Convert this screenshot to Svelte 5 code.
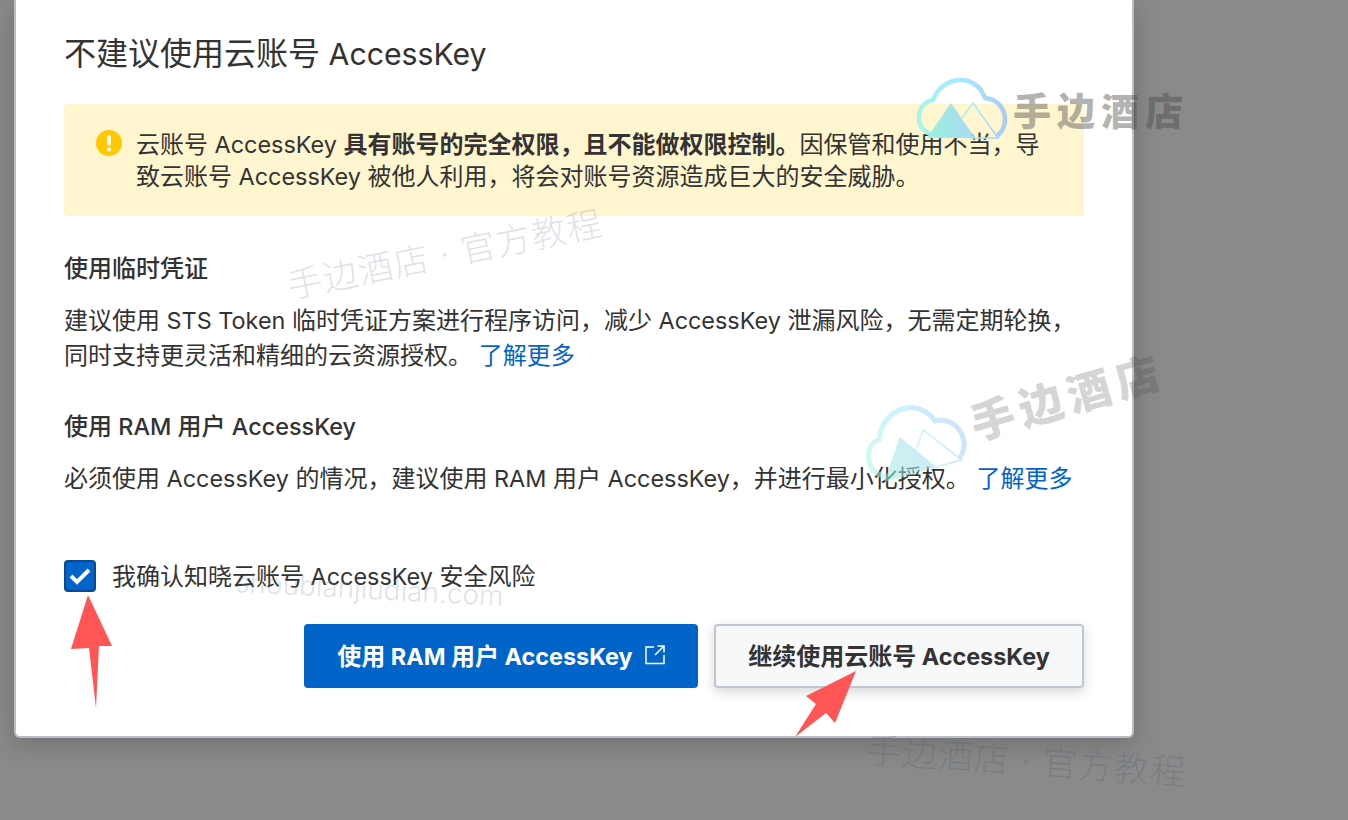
<script>
  const paragraphs = [
    {
      title: '使用临时凭证',
      body: '建议使用 STS Token 临时凭证方案进行程序访问，减少 AccessKey 泄漏风险，无需定期轮换，同时支持更灵活和精细的云资源授权。',
      top: false
    },
    {
      title: '使用 RAM 用户 AccessKey',
      body: '必须使用 AccessKey 的情况，建议使用 RAM 用户 AccessKey，并进行最小化授权。',
      top: true
    }
  ];

  // latin runs are set a touch smaller than the CJK around them
  const parts = (text) => text.match(/[A-Za-z ]+|[^A-Za-z ]+/g);
  const isLatin = (part) => /[A-Za-z]/.test(part);
</script>

{#snippet mix(text)}{#each parts(text) as part}{#if isLatin(part)}<span class="en">{part}</span>{:else}{part}{/if}{/each}{/snippet}

{#snippet cloud()}
  <svg class="cloud-svg" viewBox="0 0 92 64" fill="none">
    <defs>
      <linearGradient id="cloud-grad" x1="0" y1="0" x2="1" y2="0">
        <stop offset="0" stop-color="#a8f5e6" />
        <stop offset="0.5" stop-color="#a5e8ff" />
        <stop offset="1" stop-color="#a9cdf5" />
      </linearGradient>
      <linearGradient id="peak-grad" x1="0" y1="0" x2="1" y2="0">
        <stop offset="0" stop-color="#9cf0dd" />
        <stop offset="1" stop-color="#a9d8f5" />
      </linearGradient>
    </defs>
    <path d="M14 58 C6 54 2 48 3 40 C4 30 10 25 17 24 C22 11 33 4 45 4 C56 4 65 11 69 22 C81 23 89 32 89 44 C89 50 86 56 81 60" stroke="url(#cloud-grad)" stroke-width="4.5" />
    <path d="M35 27 L59 62 L11 62 Z" fill="url(#peak-grad)" />
    <path d="M46 42 L57 27 L82 62 H54" stroke="url(#cloud-grad)" stroke-width="1.5" />
  </svg>
{/snippet}

<div class="page">
  <div class="modal">
    <h1>{@render mix('不建议使用云账号 AccessKey')}</h1>

    <div class="alert">
      <svg class="alert-icon" viewBox="0 0 26 26" width="26" height="26">
        <circle cx="13" cy="13" r="13" fill="#ffc800" />
        <rect x="11.2" y="5" width="3.6" height="10.5" rx="1.6" fill="#fff" />
        <circle cx="13" cy="19.5" r="2.1" fill="#fff" />
      </svg>
      <p>{@render mix('云账号 AccessKey ')}<strong>具有账号的完全权限，且不能做权限控制。</strong>{@render mix('因保管和使用不当，导致云账号 AccessKey 被他人利用，将会对账号资源造成巨大的安全威胁。')}</p>
    </div>

    {#each paragraphs as item}
      <section class:second={item.top}>
        <h2>{@render mix(item.title)}</h2>
        <p>{@render mix(item.body)} <a href="#more">了解更多</a></p>
      </section>
    {/each}

    <label class="confirm">
      <span class="box">
        <svg viewBox="0 0 22 18" width="22" height="18" fill="none">
          <path d="M2 9 L8 15 L20 3" stroke="#fff" stroke-width="4" />
        </svg>
      </span>
      <span class="confirm-text">{@render mix('我确认知晓云账号 AccessKey 安全风险')}</span>
    </label>

    <div class="actions">
      <button class="primary">
        <span>{@render mix('使用 RAM 用户 AccessKey')}</span>
        <svg viewBox="0 0 20 20" width="20" height="20" fill="none" stroke="#fff" stroke-width="1.5">
          <path d="M9 2 H1 V18.5 H19 V10" />
          <path d="M10 10 L18.5 1.5 M12.5 1 H19 V7.5" />
        </svg>
      </button>
      <button class="secondary"><span>{@render mix('继续使用云账号 AccessKey')}</span></button>
    </div>
  </div>

  <!-- watermarks -->
  <span class="mark thin mark-a">手边酒店 · 官方教程</span>
  <span class="mark thin mark-b">手边酒店 · 官方教程</span>
  <span class="mark url">shoubianjiudian.com</span>
  <span class="logo logo-a">{@render cloud()}<b>手边酒店</b></span>
  <span class="logo logo-b">{@render cloud()}<b>手边酒店</b></span>

  <!-- annotation arrows -->
  <svg class="arrows" viewBox="0 0 1348 820" width="1348" height="820">
    <path d="M88 595 L112 646 L99 646 L96 708 L89 648 L71 649 Z" fill="#ff5555" />
    <path d="M856 671 L835 723 L826 713 L795 737 L816 704 L806 696 Z" fill="#ff5555" />
  </svg>
</div>

<style>
  :global(body) {
    margin: 0;
    background: #8a8a8a;
  }

  .page {
    position: relative;
    width: 1348px;
    height: 820px;
    overflow: hidden;
    background: #8a8a8a;
    font-family: Inter, "Noto Sans CJK SC", sans-serif;
    color: #333;
  }

  .modal {
    box-sizing: border-box;
    width: 1120px;
    height: 738px;
    margin-left: 14px;
    padding: 34px 48px 0;
    background: #fff;
    border: 2px solid #b9bec6;
    border-top: 0;
    border-radius: 0 0 6px 6px;
    box-shadow: 0 6px 28px rgba(0, 0, 0, 0.2);
  }

  .en {
    font-size: 0.975em;
  }

  h1 {
    margin: 0;
    font-size: 32px;
    line-height: 40px;
    font-weight: 400;
  }

  h1 .en {
    font-size: 0.945em;
  }

  .alert {
    display: flex;
    gap: 14px;
    margin-top: 30px;
    height: 112px;
    box-sizing: border-box;
    padding: 25px 32px 0;
    background: #fff5cf;
    border-radius: 4px;
  }

  .alert-icon {
    flex: none;
    margin-top: 1px;
  }

  .alert p {
    margin: 0;
    font-size: 24px;
    line-height: 32px;
  }

  .alert strong {
    font-weight: 700;
  }

  section {
    margin-top: 36px;
  }

  section.second {
    margin-top: 37px;
  }

  h2 {
    margin: 0 0 17px;
    font-size: 24px;
    line-height: 34px;
    font-weight: 500;
  }

  section p {
    margin: 0;
    font-size: 24px;
    line-height: 35px;
  }

  a {
    color: #0064c8;
    text-decoration: none;
  }

  .confirm {
    display: flex;
    align-items: center;
    gap: 16px;
    margin-top: 63px;
    font-size: 24px;
    line-height: 32px;
  }

  .confirm-text {
    padding-top: 2px;
  }

  .box {
    display: flex;
    align-items: center;
    justify-content: center;
    box-sizing: border-box;
    width: 32px;
    height: 32px;
    background: #0064c8;
    border: 2px solid #0a4a94;
    border-radius: 4px;
  }

  .actions {
    display: flex;
    justify-content: flex-end;
    gap: 16px;
    margin-top: 31px;
  }

  button {
    display: flex;
    align-items: center;
    justify-content: center;
    gap: 12px;
    box-sizing: border-box;
    height: 64px;
    padding-bottom: 4px;
    font-family: inherit;
    font-size: 24px;
    font-weight: 700;
    border-radius: 4px;
  }

  .primary {
    width: 394px;
    color: #fff;
    background: #0064c8;
    border: 0;
  }

  .secondary {
    width: 370px;
    color: #333;
    background: #f7f8fa;
    border: 2px solid #c0c6d0;
    box-shadow: 0 4px 12px rgba(0, 0, 0, 0.16);
  }

  .mark {
    position: absolute;
    white-space: nowrap;
    color: rgba(100, 125, 150, 0.22);
    pointer-events: none;
  }

  .thin {
    font-size: 35px;
    font-weight: 300;
    letter-spacing: 1px;
  }

  .mark-a {
    left: 284px;
    top: 226px;
    transform: rotate(-11.5deg);
  }

  .mark-b {
    left: 866px;
    top: 733px;
    color: rgba(70, 90, 110, 0.25);
    transform: rotate(4deg);
  }

  .url {
    left: 235px;
    top: 572px;
    font-size: 28px;
    font-weight: 300;
    transform: rotate(3deg);
  }

  .logo {
    position: absolute;
    display: flex;
    align-items: center;
    gap: 5px;
    pointer-events: none;
  }

  .cloud-svg {
    flex: none;
    width: 92px;
    height: 64px;
  }

  .logo b {
    font-size: 38px;
    font-weight: 900;
    letter-spacing: 6px;
    color: rgba(70, 70, 70, 0.42);
    white-space: nowrap;
  }

  .logo-a {
    left: 916px;
    top: 76px;
  }

  .logo-b {
    left: 857px;
    top: 374px;
    gap: 8px;
    opacity: 0.55;
    transform: rotate(-16deg);
  }

  .logo-b .cloud-svg {
    width: 104px;
    height: 72px;
  }

  .logo-b b {
    font-size: 44px;
    letter-spacing: 6px;
  }

  .arrows {
    position: absolute;
    left: 0;
    top: 0;
    pointer-events: none;
  }
</style>
